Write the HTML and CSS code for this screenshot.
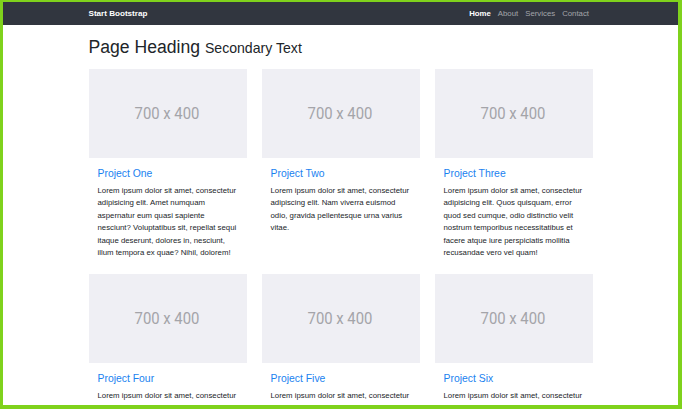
FILE: index.html
```html
<!DOCTYPE html>
<html lang="en">
<head>
  <meta charset="UTF-8">
  <meta name="viewport" content="width=device-width, initial-scale=1.0">
  <title>Start Bootstrap – Portfolio</title>
  <link rel="stylesheet" href="styles.css">
</head>
<body>

  <!-- Navigation -->
  <nav class="navbar">
    <div class="container nav-inner">
      <a class="brand" href="#">Start Bootstrap</a>
      <ul class="nav-links">
        <li><a class="active" href="#">Home</a></li>
        <li><a href="#">About</a></li>
        <li><a href="#">Services</a></li>
        <li><a href="#">Contact</a></li>
      </ul>
    </div>
  </nav>

  <!-- Page Content -->
  <main class="container">
    <h1 class="page-title">Page Heading <small>Secondary Text</small></h1>

    <div class="grid">
      <div class="card">
        <div class="thumb"><span>700 x 400</span></div>
        <div class="card-body">
          <h4 class="card-title"><a href="#">Project One</a></h4>
          <p>Lorem ipsum dolor sit amet, consectetur adipisicing elit. Amet numquam aspernatur eum quasi sapiente nesciunt? Voluptatibus sit, repellat sequi itaque deserunt, dolores in, nesciunt, illum tempora ex quae? Nihil, dolorem!</p>
        </div>
      </div>
      <div class="card">
        <div class="thumb"><span>700 x 400</span></div>
        <div class="card-body">
          <h4 class="card-title"><a href="#">Project Two</a></h4>
          <p>Lorem ipsum dolor sit amet, consectetur adipiscing elit. Nam viverra euismod odio, gravida pellentesque urna varius vitae.</p>
        </div>
      </div>
      <div class="card">
        <div class="thumb"><span>700 x 400</span></div>
        <div class="card-body">
          <h4 class="card-title"><a href="#">Project Three</a></h4>
          <p>Lorem ipsum dolor sit amet, consectetur adipisicing elit. Quos quisquam, error quod sed cumque, odio distinctio velit nostrum temporibus necessitatibus et facere atque iure perspiciatis mollitia recusandae vero vel quam!</p>
        </div>
      </div>
      <div class="card">
        <div class="thumb"><span>700 x 400</span></div>
        <div class="card-body">
          <h4 class="card-title"><a href="#">Project Four</a></h4>
          <p>Lorem ipsum dolor sit amet, consectetur adipiscing elit. Nam viverra euismod odio, gravida pellentesque urna varius vitae.</p>
        </div>
      </div>
      <div class="card">
        <div class="thumb"><span>700 x 400</span></div>
        <div class="card-body">
          <h4 class="card-title"><a href="#">Project Five</a></h4>
          <p>Lorem ipsum dolor sit amet, consectetur adipiscing elit. Nam viverra euismod odio, gravida pellentesque urna varius vitae.</p>
        </div>
      </div>
      <div class="card">
        <div class="thumb"><span>700 x 400</span></div>
        <div class="card-body">
          <h4 class="card-title"><a href="#">Project Six</a></h4>
          <p>Lorem ipsum dolor sit amet, consectetur adipisicing elit. Itaque earum nostrum suscipit ducimus nihil provident, perferendis rem illo, voluptate atque, sit eius in voluptates, nemo repellat fugiat excepturi! Nemo, esse.</p>
        </div>
      </div>
    </div>
  </main>

</body>
</html>
```

FILE: styles.css
```css
/* Reset */
* { box-sizing: border-box; margin: 0; padding: 0; }
html, body { height: 100%; }
body {
  font-family: "Liberation Sans", Arial, sans-serif;
  color: #212529;
  background: #fff;
  border-style: solid;
  border-color: #7fd21c;
  border-width: 2px 4px 4px 3px;
  overflow: hidden;
}
a { text-decoration: none; }

.container {
  width: 504px;
  margin: 0 auto;
}

/* Navbar */
.navbar {
  background: #31363f;
  height: 23px;
}
.nav-inner {
  display: flex;
  align-items: center;
  justify-content: space-between;
  height: 100%;
}
.brand {
  color: #fff;
  font-weight: bold;
  font-size: 8.1px;
}
.nav-links {
  display: flex;
  list-style: none;
  padding-right: 0;
}
.nav-links a {
  display: block;
  padding: 0 3.5px;
  font-size: 7.8px;
  color: rgba(255,255,255,.55);
}
.nav-links a.active {
  color: #fff;
  font-weight: bold;
}

/* Heading */
.page-title {
  margin: 12px 0 10px;
  font-size: 17.6px;
  font-weight: normal;
  line-height: 21px;
}
.page-title small {
  font-size: 14.1px;
}

/* Cards */
.grid {
  display: grid;
  grid-template-columns: repeat(3, 1fr);
  column-gap: 15px;
  row-gap: 6px;
}
.thumb {
  height: 89px;
  background: #efeff4;
  display: flex;
  align-items: center;
  justify-content: center;
}
.thumb span {
  font-family: Roboto, "Liberation Sans", sans-serif;
  font-size: 16.5px;
  color: #a4a4a9;
  transform: scaleX(0.9);
}
.card-body {
  padding: 9px 9px 9px 9px;
}
.card-title {
  font-size: 10.4px;
  font-weight: normal;
  line-height: 13px;
  margin-bottom: 5px;
}
.card-title a {
  color: #1a82f0;
}
.card-body p {
  font-size: 7.8px;
  line-height: 12.4px;
}
```
